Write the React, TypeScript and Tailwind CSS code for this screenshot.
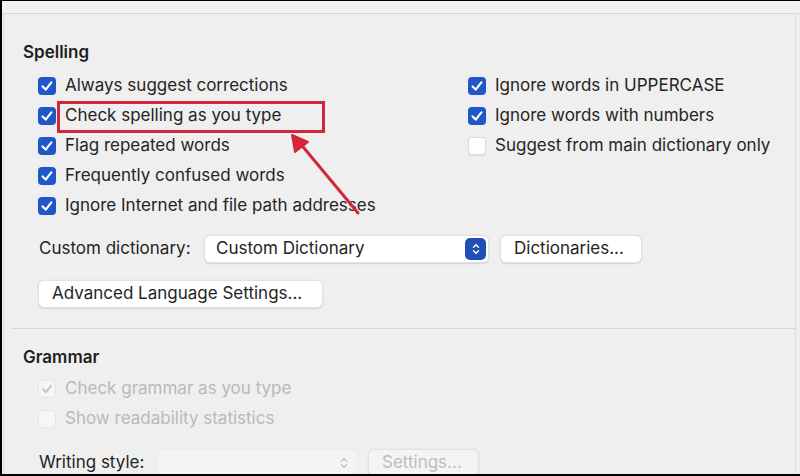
import React from "react";

type BoxProps = {
  checked?: boolean;
  disabled?: boolean;
};

const Check = ({ color }: { color: string }) => (
  <svg viewBox="0 0 18 18" className="h-[18px] w-[18px]">
    <path
      d="M4.6 9.4 L7.7 12.6 L13.4 5.4"
      fill="none"
      stroke={color}
      strokeWidth="2.2"
      strokeLinecap="round"
      strokeLinejoin="round"
    />
  </svg>
);

const Box = ({ checked, disabled }: BoxProps) => {
  if (disabled) {
    return (
      <div className="flex h-[18px] w-[18px] shrink-0 items-center justify-center rounded-[4px] border border-[#e6e6e6] bg-[#f6f6f6]">
        {checked && <Check color="#c4c4c4" />}
      </div>
    );
  }
  if (checked) {
    return (
      <div className="flex h-[18px] w-[18px] shrink-0 items-center justify-center rounded-[4px] bg-[#1f57c9]">
        <Check color="#ffffff" />
      </div>
    );
  }
  return (
    <div className="h-[18px] w-[18px] shrink-0 rounded-[4px] border border-[#dcdcdc] bg-white shadow-[0_0.5px_1px_rgba(0,0,0,0.08)]" />
  );
};

const Row = ({
  label,
  checked,
  disabled,
}: {
  label: string;
  checked?: boolean;
  disabled?: boolean;
}) => (
  <div className="flex h-[30px] items-center gap-[9px]">
    <Box checked={checked} disabled={disabled} />
    <span className={disabled ? "text-[#b9b9b9]" : "text-[#242424]"}>{label}</span>
  </div>
);

const Button = ({
  children,
  className,
  disabled,
}: {
  children: React.ReactNode;
  className: string;
  disabled?: boolean;
}) => (
  <div
    className={
      "flex h-[28px] items-center rounded-[6px] border border-[#e2e2e2] px-[13px] shadow-[0_0.5px_1.5px_rgba(0,0,0,0.12)] " +
      (disabled ? "bg-[#f4f4f4] text-[#bdbdbd] " : "bg-white text-[#242424] ") +
      className
    }
  >
    {children}
  </div>
);

const Stepper = ({ disabled }: { disabled?: boolean }) => (
  <div
    className={
      "flex h-[22px] w-[21px] items-center justify-center rounded-[5px] " +
      (disabled ? "" : "bg-[#1f4fb5]")
    }
  >
    <svg viewBox="0 0 12 16" className="h-[14px] w-[10px]">
      <path
        d="M3 6 L6 3 L9 6 M3 10 L6 13 L9 10"
        fill="none"
        stroke={disabled ? "#c2c2c2" : "#ffffff"}
        strokeWidth="1.7"
        strokeLinecap="round"
        strokeLinejoin="round"
      />
    </svg>
  </div>
);

export default function App() {
  return (
    <div
      className="relative h-[476px] w-[800px] overflow-hidden border-t border-l-2 border-b-2 border-black bg-[#efefef] text-[17px]"
      style={{ fontFamily: "Inter, 'Noto Sans', sans-serif" }}
    >
      <div className="h-[13px] border-b border-[#d9d9d9] bg-[#f2f2f2]" />
      <div className="ml-[1px] mr-[4px] h-[460px] border-x border-[#dedede]">
        {/* Spelling */}
        <div className="pl-[19px] pt-[27px] text-[17px] font-semibold leading-[22px] text-[#1e1e1e]">
          Spelling
        </div>
        <div className="mt-[8px] flex pl-[34px]">
          <div className="w-[430px]">
            <Row label="Always suggest corrections" checked />
            <Row label="Check spelling as you type" checked />
            <Row label="Flag repeated words" checked />
            <Row label="Frequently confused words" checked />
            <Row label="Ignore Internet and file path addresses" checked />
          </div>
          <div>
            <Row label="Ignore words in UPPERCASE" checked />
            <Row label="Ignore words with numbers" checked />
            <Row label="Suggest from main dictionary only" />
          </div>
        </div>

        <div className="mt-[14px] flex items-center pl-[35px] text-[#242424]">
          <span className="w-[165px]">Custom dictionary:</span>
          <div className="flex h-[28px] w-[285px] items-center justify-between rounded-[6px] border border-[#e2e2e2] bg-white pl-[11px] pr-[2px] shadow-[0_0.5px_1.5px_rgba(0,0,0,0.12)]">
            <span>Custom Dictionary</span>
            <Stepper />
          </div>
          <Button className="ml-[11px] w-[142px]">Dictionaries...</Button>
        </div>

        <div className="mt-[17px] pl-[34px]">
          <Button className="w-[285px]">Advanced Language Settings...</Button>
        </div>

        <div className="ml-[8px] mt-[20px] h-[1px] bg-[#d6d6d6]" />

        {/* Grammar */}
        <div className="pl-[19px] pt-[17px] text-[17px] font-semibold leading-[22px] text-[#1e1e1e]">
          Grammar
        </div>
        <div className="mt-[6px] pl-[34px]">
          <Row label="Check grammar as you type" checked disabled />
          <Row label="Show readability statistics" disabled />
        </div>

        <div className="mt-[15px] flex items-center pl-[35px] text-[#242424]">
          <span className="w-[118px]">Writing style:</span>
          <div className="flex h-[28px] w-[200px] items-center justify-end rounded-[6px] border border-[#ececec] bg-[#f4f4f4] pr-[2px]">
            <Stepper disabled />
          </div>
          <Button className="ml-[11px] w-[111px]" disabled>
            Settings...
          </Button>
        </div>
      </div>

      {/* annotation: red box + arrow */}
      <div className="absolute left-[55px] top-[100px] h-[32px] w-[268px] border-[3px] border-[#d3263a]" />
      <svg className="absolute left-0 top-0" width="800" height="476">
        <line x1="356" y1="212" x2="297" y2="141" stroke="#d3263a" strokeWidth="3" strokeLinecap="round" />
        <path d="M290 134 L293 151 L306 141 Z" fill="#d3263a" stroke="#d3263a" strokeWidth="2" strokeLinejoin="round" />
      </svg>
    </div>
  );
}
